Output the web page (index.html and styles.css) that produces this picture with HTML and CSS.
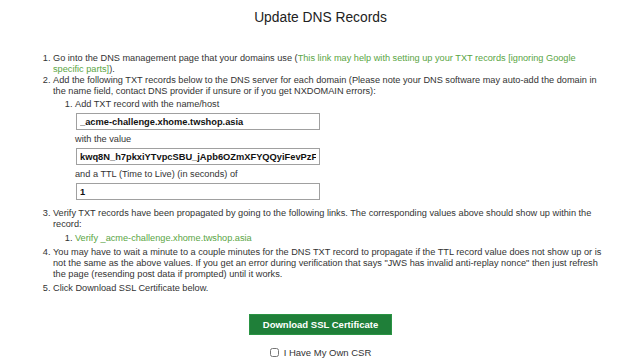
FILE: index.html
```html
<!DOCTYPE html>
<html lang="en">
<head>
  <meta charset="UTF-8">
  <meta name="viewport" content="width=device-width, initial-scale=1.0">
  <title>Update DNS Records</title>
  <link rel="stylesheet" href="styles.css">
</head>
<body>
  <main class="page">
    <h1 class="page-title">Update DNS Records</h1>

    <ol class="steps">
      <li>Go into the DNS management page that your domains use (<a href="#" class="link">This link may help with setting up your TXT records [ignoring Google specific parts]</a>).</li>
      <li>Add the following TXT records below to the DNS server for each domain (Please note your DNS software may auto-add the domain in the name field, contact DNS provider if unsure or if you get NXDOMAIN errors):
        <ol class="sub-steps record-list">
          <li>Add TXT record with the name/host
            <input type="text" class="record-input" value="_acme-challenge.xhome.twshop.asia" readonly>
            <div class="record-label">with the value</div>
            <input type="text" class="record-input" value="kwq8N_h7pkxiYTvpcSBU_jApb6OZmXFYQQyiFevPzFI" readonly>
            <div class="record-label">and a TTL (Time to Live) (in seconds) of</div>
            <input type="text" class="record-input" value="1" readonly>
          </li>
        </ol>
      </li>
      <li>Verify TXT records have been propagated by going to the following links. The corresponding values above should show up within the record:
        <ol class="sub-steps verify-list">
          <li><a href="#" class="link">Verify _acme-challenge.xhome.twshop.asia</a></li>
        </ol>
      </li>
      <li>You may have to wait a minute to a couple minutes for the DNS TXT record to propagate if the TTL record value does not show up or is not the same as the above values. If you get an error during verification that says "JWS has invalid anti-replay nonce" then just refresh the page (resending post data if prompted) until it works.</li>
      <li>Click Download SSL Certificate below.</li>
    </ol>

    <div class="actions">
      <button class="download-btn">Download SSL Certificate</button>
      <label class="csr-check">
        <input type="checkbox" class="csr-box">
        <span>I Have My Own CSR</span>
      </label>
    </div>
  </main>
</body>
</html>
```

FILE: styles.css
```css
* {
  margin: 0;
  padding: 0;
  box-sizing: border-box;
}

body {
  font-family: "Liberation Sans", Arial, sans-serif;
  background: #fff;
  color: #333;
}

.page {
  margin: 0 36px 0 35px;
}

/* Title */
.page-title {
  font-size: 13.8px;
  font-weight: normal;
  line-height: 16px;
  color: #222;
  text-align: center;
  margin: 10px 0 0 2px;
}

/* Steps */
.steps {
  margin-top: 27px;
  padding-left: 18px;
  font-size: 9.2px;
  line-height: 11px;
}

.steps > li {
  margin-bottom: 3px;
}

.steps > li:first-child {
  margin-bottom: 0;
}

.link {
  color: #5aa544;
  text-decoration: none;
}

.sub-steps {
  padding-left: 22px;
  margin-top: 2px;
}

.record-list {
  padding-bottom: 1px;
}

.verify-list {
  margin-top: 3px;
}

.record-input {
  display: block;
  width: 244px;
  height: 17px;
  margin: 3px 0 4px 1px;
  padding: 0 3px;
  border: 1px solid #a0a0a0;
  font-family: "Liberation Sans", Arial, sans-serif;
  font-size: 9.3px;
  font-weight: bold;
  color: #111;
  background: #fff;
  outline: none;
}

.record-label {
  line-height: 11px;
}

/* Actions */
.actions {
  display: flex;
  flex-direction: column;
  align-items: center;
  margin: 20px 0 0 2px;
}

.download-btn {
  width: 143px;
  height: 21px;
  background: #1f7f39;
  border: 1px solid #2a9444;
  color: #fff;
  font-family: "Liberation Sans", Arial, sans-serif;
  font-size: 9.5px;
  font-weight: bold;
  cursor: pointer;
}

.csr-check {
  display: flex;
  align-items: center;
  gap: 5px;
  margin-top: 12px;
  font-size: 9.5px;
  color: #333;
}

.csr-box {
  width: 9px;
  height: 9px;
  margin: 0;
}
```
